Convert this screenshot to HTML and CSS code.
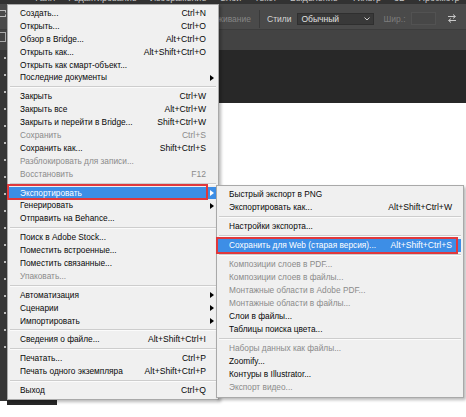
FILE: index.html
```html
<!DOCTYPE html>
<html lang="ru">
<head>
<meta charset="utf-8">
<title>Файл — Экспортировать</title>
<link rel="stylesheet" href="styles.css">
</head>
<body>
<div class="app">
  <div class="menubar">
    <div class="menubar-items">
      <span class="mb-open">Файл</span><span>Редактирование</span><span>Изображение</span><span>Слои</span><span>Текст</span><span>Выделение</span><span>Фильтр</span><span>3D</span><span>Просмотр</span><span>Окно</span><span>Справка</span>
    </div>
  </div>
  <div class="optbar">
    <span class="opt-aa"><span class="opt-aa-text">Сглаживание</span></span>
    <span class="opt-div"></span>
    <span class="opt-label">Стили</span>
    <span class="opt-select">Обычный<svg class="chev" width="6" height="4" viewBox="0 0 6 4"><path d="M0.5 0.5 L3 3 L5.5 0.5" fill="none" stroke="#cfcfcf" stroke-width="1"/></svg></span>
    <span class="opt-dim">Шир.:</span>
    <span class="opt-input"></span>
    <svg class="opt-swap" width="10" height="9" viewBox="0 0 10 9"><path d="M1 2.5 H8 M6 0.5 L8.5 2.5 L6 4.5" fill="none" stroke="#c8c8c8" stroke-width="1"/><path d="M9 6.5 H2 M4 4.5 L1.5 6.5 L4 8.5" fill="none" stroke="#c8c8c8" stroke-width="1"/></svg>
    <span class="opt-dim opt-h">Выс.:</span>
  </div>
  <div class="tabstrip"></div>
  <div class="workspace">
    <div class="toolstrip">
      <i class="tool-icon"></i><i class="tool-box"></i>
      <i></i><i></i><i></i><i></i><i></i><i></i><i></i><i></i><i></i><i></i><i></i><i></i><i></i><i></i><i></i><i></i><i></i><i></i>
    </div>
    <div class="canvas">
      <div class="doc"></div>
    </div>
  </div>
</div>

<div class="menu file-menu">
  <div class="item"><span>Создать...</span><span class="sc">Ctrl+N</span><span></span></div>
  <div class="item"><span>Открыть...</span><span class="sc">Ctrl+O</span><span></span></div>
  <div class="item"><span>Обзор в Bridge...</span><span class="sc">Alt+Ctrl+O</span><span></span></div>
  <div class="item"><span>Открыть как...</span><span class="sc">Alt+Shift+Ctrl+O</span><span></span></div>
  <div class="item"><span>Открыть как смарт-объект...</span><span class="sc"></span><span></span></div>
  <div class="item"><span>Последние документы</span><span class="sc"></span><span class="arrow"></span></div>
  <div class="sep"></div>
  <div class="item"><span>Закрыть</span><span class="sc">Ctrl+W</span><span></span></div>
  <div class="item"><span>Закрыть все</span><span class="sc">Alt+Ctrl+W</span><span></span></div>
  <div class="item"><span>Закрыть и перейти в Bridge...</span><span class="sc">Shift+Ctrl+W</span><span></span></div>
  <div class="item off"><span>Сохранить</span><span class="sc">Ctrl+S</span><span></span></div>
  <div class="item"><span>Сохранить как...</span><span class="sc">Shift+Ctrl+S</span><span></span></div>
  <div class="item off"><span>Разблокировать для записи...</span><span class="sc"></span><span></span></div>
  <div class="item off"><span>Восстановить</span><span class="sc">F12</span><span></span></div>
  <div class="sep"></div>
  <div class="item hl hl-main"><span>Экспортировать</span><span class="sc"></span><span class="arrow"></span></div>
  <div class="item"><span>Генерировать</span><span class="sc"></span><span class="arrow"></span></div>
  <div class="item"><span>Отправить на Behance...</span><span class="sc"></span><span></span></div>
  <div class="sep"></div>
  <div class="item"><span>Поиск в Adobe Stock...</span><span class="sc"></span><span></span></div>
  <div class="item"><span>Поместить встроенные...</span><span class="sc"></span><span></span></div>
  <div class="item"><span>Поместить связанные...</span><span class="sc"></span><span></span></div>
  <div class="item off"><span>Упаковать...</span><span class="sc"></span><span></span></div>
  <div class="sep"></div>
  <div class="item"><span>Автоматизация</span><span class="sc"></span><span class="arrow"></span></div>
  <div class="item"><span>Сценарии</span><span class="sc"></span><span class="arrow"></span></div>
  <div class="item"><span>Импортировать</span><span class="sc"></span><span class="arrow"></span></div>
  <div class="sep"></div>
  <div class="item"><span>Сведения о файле...</span><span class="sc">Alt+Shift+Ctrl+I</span><span></span></div>
  <div class="sep"></div>
  <div class="item"><span>Печатать...</span><span class="sc">Ctrl+P</span><span></span></div>
  <div class="item"><span>Печать одного экземпляра</span><span class="sc">Alt+Shift+Ctrl+P</span><span></span></div>
  <div class="sep"></div>
  <div class="item"><span>Выход</span><span class="sc">Ctrl+Q</span><span></span></div>
</div>

<div class="menu export-menu">
  <div class="item"><span>Быстрый экспорт в PNG</span><span class="sc"></span><span></span></div>
  <div class="item"><span>Экспортировать как...</span><span class="sc">Alt+Shift+Ctrl+W</span><span></span></div>
  <div class="sep"></div>
  <div class="item"><span>Настройки экспорта...</span><span class="sc"></span><span></span></div>
  <div class="sep"></div>
  <div class="item hl hl-sub"><span>Сохранить для Web (старая версия)...</span><span class="sc">Alt+Shift+Ctrl+S</span><span></span></div>
  <div class="sep"></div>
  <div class="item off"><span>Композиции слоев в PDF...</span><span class="sc"></span><span></span></div>
  <div class="item off"><span>Композиции слоев в файлы...</span><span class="sc"></span><span></span></div>
  <div class="item off"><span>Монтажные области в Adobe PDF...</span><span class="sc"></span><span></span></div>
  <div class="item off"><span>Монтажные области в файлы...</span><span class="sc"></span><span></span></div>
  <div class="item"><span>Слои в файлы...</span><span class="sc"></span><span></span></div>
  <div class="item"><span>Таблицы поиска цвета...</span><span class="sc"></span><span></span></div>
  <div class="sep"></div>
  <div class="item off"><span>Наборы данных как файлы...</span><span class="sc"></span><span></span></div>
  <div class="item"><span>Zoomify...</span><span class="sc"></span><span></span></div>
  <div class="item"><span>Контуры в Illustrator...</span><span class="sc"></span><span></span></div>
  <div class="item off"><span>Экспорт видео...</span><span class="sc"></span><span></span></div>
</div>
</body>
</html>
```

FILE: styles.css
```css
html, body {
  margin: 0;
  padding: 0;
}
body {
  width: 466px;
  height: 417px;
  overflow: hidden;
  background: #ffffff;
  font-family: "Liberation Sans", Arial, sans-serif;
  position: relative;
}

/* ---------- Photoshop background ---------- */
.app {
  display: flex;
  flex-direction: column;
  height: 405px;
}
.menubar {
  height: 4px;
  overflow: hidden;
  background: #323232;
}
.menubar-items {
  display: flex;
  gap: 13px;
  padding-left: 33px;
  margin-top: -7px;
  font-size: 9px;
  line-height: 10px;
  color: #c8c8c8;
  white-space: nowrap;
}
.optbar {
  height: 25px;
  box-sizing: border-box;
  padding-top: 4px;
  background: #4a4a4a;
  display: flex;
  align-items: center;
  font-size: 8.5px;
  white-space: nowrap;
}
.opt-aa {
  width: 32px;
  margin-left: 219px;
  overflow: hidden;
  display: flex;
  justify-content: flex-end;
  flex: none;
}
.opt-aa-text {
  color: #858585;
  flex: none;
}
.opt-div {
  width: 1px;
  height: 18px;
  background: #3a3a3a;
  margin: 0 7px 0 8px;
  flex: none;
}
.opt-label {
  color: #d6d6d6;
}
.opt-select {
  margin-left: 5px;
  width: 77px;
  height: 12px;
  box-sizing: border-box;
  background: #393939;
  border: 1px solid #2f2f2f;
  color: #e0e0e0;
  padding-left: 4px;
  line-height: 10px;
  display: flex;
  align-items: center;
  justify-content: space-between;
  padding-right: 3px;
  flex: none;
}
.chev { display: block; }
.opt-dim {
  color: #7c7c7c;
  margin-left: 10px;
}
.opt-input {
  margin-left: 5px;
  width: 23px;
  height: 11px;
  background: #474747;
  border: 1px solid #525252;
  flex: none;
}
.opt-swap {
  margin-left: 11px;
  flex: none;
}
.opt-h {
  margin-left: 13px;
}
.tabstrip {
  height: 21px;
  background: #434343;
  border-top: 1px solid #3c3c3c;
  box-sizing: border-box;
}
.workspace {
  flex: 1;
  display: flex;
}
.toolstrip {
  width: 7px;
  background: #363636;
  display: flex;
  flex-direction: column;
  align-items: flex-end;
  gap: 15px;
  padding-top: 12px;
  box-sizing: border-box;
  margin-bottom: 4px;
}
.toolstrip i {
  display: block;
  width: 2px;
  height: 2px;
  background: #bdbdbd;
  margin-right: 1px;
}
.toolstrip .tool-icon {
  width: 5px;
  height: 5px;
  background: none;
  border: 1px dashed #bbb;
  border-left: none;
  margin-right: 1px;
  margin-top: -52px;
}
.toolstrip .tool-box {
  width: 5px;
  height: 8px;
  background: none;
  border: 1px solid #aaa;
  border-left: none;
}
.canvas {
  flex: 1;
  background: #282828;
  padding: 53px 0 0 50px;
  display: flex;
}
.doc {
  flex: 1;
  background: #ffffff;
}

/* ---------- Menus ---------- */
.menu {
  position: absolute;
  background: #f0f0f0;
  border: 1px solid #a9a9a9;
  box-shadow: 2px 2px 3px rgba(0, 0, 0, 0.28);
  font-size: 8.3px;
  color: #080808;
  box-sizing: border-box;
}
.file-menu {
  left: 7px;
  top: 4px;
  width: 212px;
  padding: 2px 0 2px 0;
}
.export-menu {
  left: 216px;
  top: 185px;
  width: 248px;
  padding: 1.5px 0 3px 0;
  z-index: 2;
}
.item {
  position: relative;
  display: grid;
  grid-template-columns: 1fr auto 9px;
  align-items: center;
  height: 13px;
  line-height: 13px;
  margin: 0 2px 0 1px;
  padding-left: 11px;
  white-space: nowrap;
}
.file-menu .item {
  height: 12.9px;
  line-height: 12.9px;
  grid-template-columns: 1fr auto 10px;
}
.sc {
  font-size: 8.6px;
}
.off {
  color: #8b8b8b;
}
.arrow {
  justify-self: center;
  width: 0;
  height: 0;
  border-left: 4px solid #000;
  border-top: 3.5px solid transparent;
  border-bottom: 3.5px solid transparent;
  margin-left: 1px;
}
.sep {
  height: 6px;
  margin: 0 2px 0 2px;
  position: relative;
}
.sep::before {
  content: "";
  position: absolute;
  left: 0;
  right: 0;
  top: 2px;
  height: 1px;
  background: #cdcdcd;
}
.sep::after {
  content: "";
  position: absolute;
  left: 0;
  right: 0;
  top: 3px;
  height: 1px;
  background: #fbfbfb;
}
.hl {
  background: #3d8ee6;
  color: #ffffff;
}
.hl .arrow {
  border-left-color: #ffffff;
}
.hl::after {
  content: "";
  position: absolute;
  border: 2px solid #e0383c;
  box-sizing: border-box;
}
.hl-main::after {
  left: -2px;
  right: 8px;
  top: -3px;
  bottom: -1px;
}
.hl-sub::after {
  left: -2px;
  right: 3px;
  top: -2px;
  bottom: -2px;
}
```
